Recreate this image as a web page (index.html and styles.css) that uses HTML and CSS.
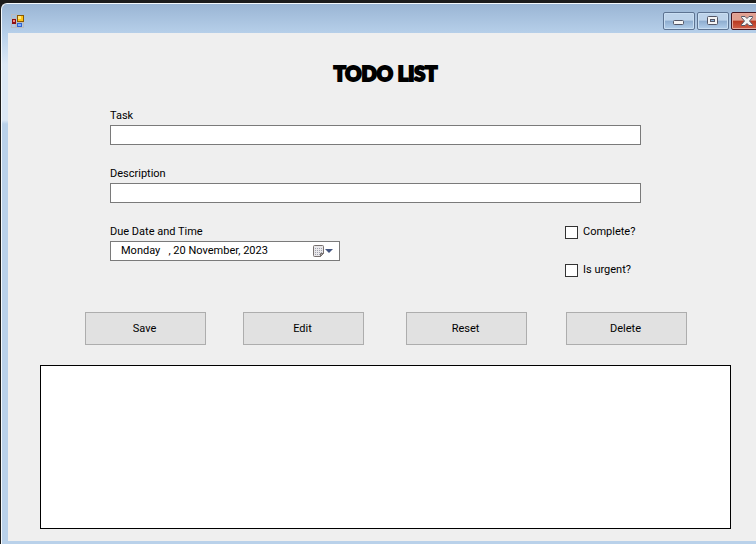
FILE: index.html
```html
<!DOCTYPE html>
<html lang="en">
<head>
<meta charset="utf-8">
<title>Todo List</title>
<link rel="stylesheet" href="styles.css">
</head>
<body>
<div class="window">
  <header class="titlebar">
    <svg class="app-icon" width="14" height="14" viewBox="0 0 14 14" shape-rendering="crispEdges" aria-hidden="true">
      <path d="M.5 .5h5v4h-5zM.5 9.500h4v4h-4zM5.500 8.500h7v5h-7z" fill="none" stroke="#b9bcc0"/>
      <rect x="6" y="1" width="7" height="7" fill="#8a5a00"/>
      <rect x="7" y="2" width="5" height="5" fill="#ffc61a"/>
      <rect x="7" y="2" width="3" height="3" fill="#ffe680"/>
      <rect x="1" y="5" width="4" height="5" fill="#8e0f0f"/>
      <rect x="2" y="6" width="2" height="2" fill="#f08a80"/>
      <rect x="6" y="9" width="5" height="4" fill="#2f62d0"/>
      <rect x="7" y="10" width="3" height="2" fill="#7fb0ff"/>
    </svg>
    <div class="controls">
      <button class="control" type="button" aria-label="Minimize">
        <svg width="12" height="12" viewBox="0 0 12 12" aria-hidden="true"><rect x=".5" y="5.500" width="10" height="4" rx="1" fill="#f4f4f4" stroke="#535666"/></svg>
      </button>
      <button class="control" type="button" aria-label="Maximize">
        <svg width="12" height="12" viewBox="0 0 12 12" aria-hidden="true"><rect x=".5" y="1.500" width="10" height="8" rx="1" fill="#f4f4f4" stroke="#535666"/><rect x="3.500" y="4.500" width="4" height="2" fill="#8fb4da" stroke="#535666"/></svg>
      </button>
      <button class="control close" type="button" aria-label="Close">
        <svg width="12" height="12" viewBox="0 0 12 12" aria-hidden="true"><path d="M.5 1.500h3.500l2 2 2-2h3.500v1l-3 3.500 3 3.500v1h-3.500l-2-2-2 2h-3.500v-1l3-3.500-3-3.500z" fill="#f4f4f4" stroke="#535666"/></svg>
      </button>
    </div>
  </header>
  <main class="client">
    <h1 class="title">TODO LIST</h1>
    <form class="form">
      <div class="field">
        <label for="task">Task</label>
        <input class="box" id="task" type="text">
      </div>
      <div class="field">
        <label for="description">Description</label>
        <input class="box" id="description" type="text">
      </div>
      <div class="details">
        <div class="field due">
          <label for="due">Due Date and Time</label>
          <div class="box picker">
            <input class="date" id="due" type="text" value="Monday   , 20 November, 2023">
            <button class="calendar" type="button" aria-label="Open calendar">
              <svg width="22" height="14" viewBox="0 0 22 14" aria-hidden="true">
                <path d="M1.500 1.500h8q1 0 1 1v7l-3 3h-6q-1 0-1-1v-9q0-1 1-1z" fill="#e9e8ea" stroke="#77706f"/>
                <path d="M10.500 9.500h-3v3z" fill="#aaa" stroke="#77706f"/>
                <path d="M2 4.500h7M2 6.500h7M2 8.500h7M2 10.500h5" stroke="#a0a1ae" stroke-dasharray="1 1"/>
                <path d="M12 5h8l-4 4z" fill="#435580"/>
              </svg>
            </button>
          </div>
        </div>
        <div class="checks">
          <label class="check"><input type="checkbox">Complete?</label>
          <label class="check"><input type="checkbox">Is urgent?</label>
        </div>
      </div>
    </form>
    <div class="actions">
      <button class="action" type="button">Save</button>
      <button class="action" type="button">Edit</button>
      <button class="action" type="button">Reset</button>
      <button class="action" type="button">Delete</button>
    </div>
    <section class="list" aria-label="Tasks"></section>
  </main>
</div>
</body>
</html>
```
FILE: styles.css
```css
* {
  box-sizing: border-box;
}

body {
  margin: 0;
  height: 100vh;
  overflow: hidden;
  padding: 3px 0 0 1px;
  background: #1c1c1c;
  color: #000;
  font: 11px/18px Roboto, "Liberation Sans", Arial, sans-serif;
}

button,
input {
  font: inherit;
  color: inherit;
}

.window {
  display: flex;
  flex-direction: column;
  height: 100%;
  border: solid #f4f9fd;
  border-width: 1px 0 0 1px;
  border-top-left-radius: 6px;
  padding: 0 0 3px 6px;
  background: linear-gradient(#9ab5d4, #b7d0ea 30px, #dce8f5 60px, #dce8f5 116px, #b9d1ea 120px);
}

.titlebar {
  display: flex;
  flex: none;
  justify-content: space-between;
  height: 29px;
  padding: 8px 0 0 3px;
  overflow: hidden;
}

.app-icon {
  margin-top: 2px;
}

.controls {
  display: flex;
  gap: 2px;
  margin-right: -7px;
}

.control {
  display: flex;
  align-items: center;
  justify-content: center;
  width: 32px;
  height: 18px;
  padding: 0;
  border: 1px solid #5d7391;
  border-radius: 2px;
  background: linear-gradient(#bdd3ea 45%, #8eadcf 50%, #b3cfeb);
  box-shadow: inset 0 0 0 1px #c9def2;
}

.close {
  border-color: #431621;
  background: linear-gradient(#e0a091 45%, #b83820 50%, #d0604a);
  box-shadow: inset 0 0 0 1px #e5a79b;
}

.client {
  display: flex;
  flex: 1;
  flex-direction: column;
  padding: 28px 25px 12px 32px;
  background: #efefef;
}

.title {
  margin: 0 0 22px;
  font: 900 20px/24px Lato, sans-serif;
  text-align: center;
  -webkit-text-stroke: 2px #000;
}

.form {
  display: flex;
  flex-direction: column;
  gap: 20px;
  padding: 0 90px 0 70px;
}

.field {
  display: flex;
  flex-direction: column;
}

.box {
  width: 100%;
  height: 20px;
  padding: 0 4px;
  border: 1px solid #7a7a7a;
  border-radius: 0;
  background: #fff;
}

.details {
  display: flex;
  justify-content: space-between;
}

.due {
  width: 230px;
}

.picker {
  display: flex;
  align-items: center;
  padding: 0 4px 0 10px;
}

.date {
  flex: 1;
  min-width: 0;
  height: 18px;
  padding: 0;
  border: 0;
  background: transparent;
}

.calendar {
  display: flex;
  padding: 0;
  border: 0;
  background: none;
}

.checks {
  display: flex;
  flex-direction: column;
  gap: 20px;
  width: 76px;
}

.check {
  display: flex;
  align-items: center;
  gap: 5px;
  white-space: nowrap;
}

.check input {
  appearance: none;
  flex: none;
  width: 13px;
  height: 13px;
  margin: 0;
  border: 1px solid #333;
  background: #fff;
}

.check input:checked {
  background: #333;
}

.actions {
  display: grid;
  grid-template-columns: 158fr 163fr 160fr 121fr;
  margin: 33px 44px 20px 45px;
}

.action {
  width: 121px;
  height: 33px;
  padding: 0 2px 0 0;
  border: 1px solid #adadad;
  border-radius: 0;
  background: #e1e1e1;
}

.list {
  flex: 1;
  border: 1px solid #000;
  background: #fff;
}
```
